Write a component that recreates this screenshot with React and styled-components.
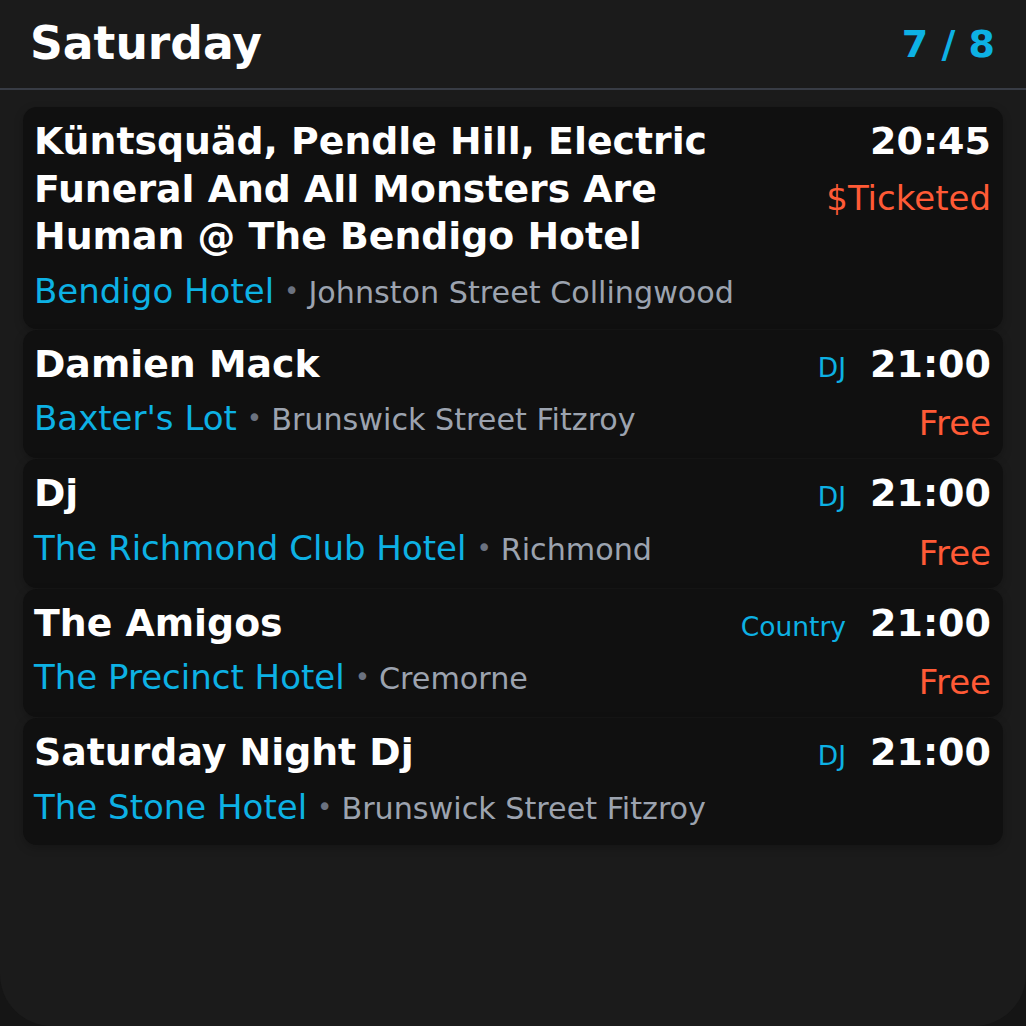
import styled, { createGlobalStyle } from "styled-components";

const GlobalStyle = createGlobalStyle`
  html, body {
    margin: 0;
    padding: 0;
    background: #151515;
  }
  body {
    font-family: "DejaVu Sans", "Liberation Sans", sans-serif;
  }
`;

const Frame = styled.div`
  width: 1026px;
  height: 1026px;
  box-sizing: border-box;
  background: #1b1b1b;
  border-radius: 0 0 52px 52px;
  overflow: hidden;
  display: flex;
  flex-direction: column;
`;

const Header = styled.header`
  height: 88px;
  flex-shrink: 0;
  display: flex;
  align-items: center;
  justify-content: space-between;
  padding: 0 31px 0 30px;
  border-bottom: 2px solid #383c45;
`;

const DayTitle = styled.h1`
  margin: 0;
  font-size: 45.6px;
  font-weight: 700;
  color: #ffffff;
  line-height: 1;
`;

const Pager = styled.span`
  font-size: 38px;
  font-weight: 700;
  color: #0db1e4;
  line-height: 1;
`;

const List = styled.div`
  display: flex;
  flex-direction: column;
  gap: 1px;
  padding: 17px 23px;
`;

const Card = styled.article`
  display: flex;
  gap: 24px;
  background: #101010;
  border-radius: 14px;
  padding: 11px 12px 13px 11px;
  box-shadow: 0 3px 10px rgba(0, 0, 0, 0.22);
`;

const Main = styled.div`
  flex: 1;
  min-width: 0;
  display: flex;
  flex-direction: column;
  gap: 8px;
`;

const Side = styled.div`
  flex-shrink: 0;
  display: flex;
  flex-direction: column;
  align-items: flex-end;
  gap: 10px;
`;

const Title = styled.div`
  font-size: 37.8px;
  font-weight: 700;
  line-height: 47.5px;
  color: #ffffff;
`;

const VenueLine = styled.div`
  font-size: 34px;
  line-height: 44px;
  white-space: nowrap;
`;

const Venue = styled.span`
  color: #0db1e4;
`;

const Dot = styled.span`
  color: #6b7280;
  font-size: 26px;
  margin: 0 9px 0 10px;
  position: relative;
  top: -3px;
`;

const Address = styled.span`
  color: #9ca3af;
  font-size: 30.2px;
`;

const TimeRow = styled.div`
  display: flex;
  align-items: baseline;
  gap: 24px;
  line-height: 47.5px;
`;

const Tag = styled.span`
  font-size: 26.5px;
  color: #0db1e4;
`;

const Time = styled.span`
  font-size: 38px;
  font-weight: 700;
  color: #ffffff;
`;

const Price = styled.div`
  font-size: 34px;
  line-height: 44px;
  color: #ff5a36;
`;

const gigs = [
  {
    title: "Küntsquäd, Pendle Hill, Electric Funeral And All Monsters Are Human @ The Bendigo Hotel",
    venue: "Bendigo Hotel",
    area: "Johnston Street Collingwood",
    time: "20:45",
    price: "$Ticketed",
  },
  {
    title: "Damien Mack",
    venue: "Baxter's Lot",
    area: "Brunswick Street Fitzroy",
    tag: "DJ",
    time: "21:00",
    price: "Free",
  },
  {
    title: "Dj",
    venue: "The Richmond Club Hotel",
    area: "Richmond",
    tag: "DJ",
    time: "21:00",
    price: "Free",
  },
  {
    title: "The Amigos",
    venue: "The Precinct Hotel",
    area: "Cremorne",
    tag: "Country",
    time: "21:00",
    price: "Free",
  },
  {
    title: "Saturday Night Dj",
    venue: "The Stone Hotel",
    area: "Brunswick Street Fitzroy",
    tag: "DJ",
    time: "21:00",
  },
];

export default function App() {
  return (
    <>
      <GlobalStyle />
      <Frame>
        <Header>
          <DayTitle>Saturday</DayTitle>
          <Pager>7 / 8</Pager>
        </Header>
        <List>
          {gigs.map((g, i) => (
            <Card key={i}>
              <Main>
                <Title>{g.title}</Title>
                <VenueLine>
                  <Venue>{g.venue}</Venue>
                  <Dot>•</Dot>
                  <Address>{g.area}</Address>
                </VenueLine>
              </Main>
              <Side>
                <TimeRow>
                  {g.tag && <Tag>{g.tag}</Tag>}
                  <Time>{g.time}</Time>
                </TimeRow>
                {g.price && <Price>{g.price}</Price>}
              </Side>
            </Card>
          ))}
        </List>
      </Frame>
    </>
  );
}
